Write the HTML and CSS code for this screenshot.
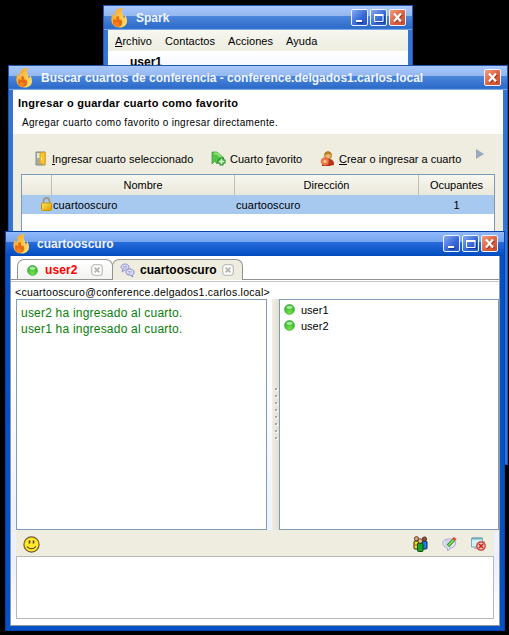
FILE: index.html
```html
<!DOCTYPE html>
<html lang="es">
<head>
<meta charset="utf-8">
<title>Spark</title>
<link rel="stylesheet" href="styles.css">
</head>
<body>
<svg class="defs" width="0" height="0">
  <defs>
    <linearGradient id="fire" x1="0" y1="0" x2="1" y2="1"><stop offset="0" stop-color="#f79a1c"/><stop offset=".5" stop-color="#fdc54a"/><stop offset="1" stop-color="#ffe373"/></linearGradient>
    <radialGradient id="ball" cx=".5" cy=".8" r=".8"><stop offset="0" stop-color="#79e04c"/><stop offset=".7" stop-color="#38bd30"/><stop offset="1" stop-color="#249a26"/></radialGradient>
    <linearGradient id="gold" x1="0" y1="0" x2="1" y2="1"><stop offset="0" stop-color="#ffe65a"/><stop offset="1" stop-color="#dd9a00"/></linearGradient>
    <symbol id="flame" viewBox="0 0 18 20">
      <path d="M12 0C4 0 3 4 5 8C3 8 2 7 2 5C0 9 0 12 1 15C3 19 6 19.500 9 19.500C13 19.500 16 17 16 13C16 11 15.500 9 14 7C14 9 13.500 10 12.500 10C13 7 9 4 12 0Z" fill="url(#fire)"/>
      <path d="M8 8C4 8 5 11 6 12C4 12 3.500 11 3 10.500C1.500 13 1.500 16 4 18C6 19.500 10 19 11 16C12 13 10 12 10 11C9.500 12 9 12 8.500 12C9 10 7 10 8 8Z" fill="#ea6c12"/>
      <path d="M3.500 15.500C5 13 6.500 14.500 8 15.500C9 16.500 8 18 6.500 18C5 18 3.500 17 3.500 15.500Z" fill="#f58420"/>
    </symbol>
    <symbol id="min" viewBox="0 0 17 17"><path d="M6 13.500h6" stroke="#173c9b" stroke-width="2"/><path d="M5 12h6" stroke="#fff" stroke-width="2"/></symbol>
    <symbol id="max" viewBox="0 0 17 17"><path d="M6 13.500h8.500V7" stroke="#173c9b" fill="none"/><path d="M4.500 6.500h8.500v6h-8.500z" stroke="#fff" fill="none"/><path d="M4 6h9.500" stroke="#fff" stroke-width="2"/></symbol>
    <symbol id="cross" viewBox="0 0 17 17"><path d="M6 5.500l7 8M13 5.500l-7 8" stroke="#9c311f" stroke-width="2"/><path d="M5 4.500l7 8M12 4.500l-7 8" stroke="#fff" stroke-width="2.200"/></symbol>
    <symbol id="dot" viewBox="0 0 11 11"><circle cx="5.500" cy="5.500" r="5" fill="url(#ball)" stroke="#45aa3b" stroke-width=".6"/><ellipse cx="5.500" cy="3.200" rx="3" ry="1.700" fill="#caf5bd" opacity=".75"/></symbol>
    <symbol id="tabx" viewBox="0 0 11 11"><rect x=".6" y=".6" width="9.800" height="9.800" rx="3" fill="#fff" stroke="#c0c0bc" stroke-width="1.200"/><path d="M3.300 3.300l4.400 4.400M7.700 3.300l-4.400 4.400" stroke="#b5b5b2" stroke-width="1.700"/></symbol>
  </defs>
</svg>

<main class="desktop">
  <section class="window spark">
    <header class="titlebar">
      <svg class="flame"><use href="#flame"/></svg>
      <h1>Spark</h1>
      <div class="controls">
        <button class="ctl"><svg><use href="#min"/></svg></button>
        <button class="ctl"><svg><use href="#max"/></svg></button>
        <button class="ctl close"><svg><use href="#cross"/></svg></button>
      </div>
    </header>
    <nav class="menubar"><span><u>A</u>rchivo</span><span>Contactos</span><span>Acciones</span><span>Ayuda</span></nav>
    <div class="profile">user1</div>
  </section>

  <section class="window browse">
    <header class="titlebar">
      <svg class="flame"><use href="#flame"/></svg>
      <h1>Buscar cuartos de conferencia - conference.delgados1.carlos.local</h1>
      <div class="controls"><button class="ctl close"><svg><use href="#cross"/></svg></button></div>
    </header>
    <div class="intro">
      <h2>Ingresar o guardar cuarto como favorito</h2>
      <p>Agregar cuarto como favorito o ingresar directamente.</p>
    </div>
    <div class="actions">
      <svg class="ic-door" viewBox="0 0 12 15"><path d="M1 1h9v13H1z" fill="#a8aea6" stroke="#888c80"/><path d="M2 2h3v5H2z" fill="#d7edf2"/><path d="M5 2l5-1v13l-5-2z" fill="#ffc42e" stroke="#dfa01b"/><path d="M6 8h1" stroke="#fff3bc" stroke-width="2"/></svg>
      <span class="a1"><u>I</u>ngresar cuarto seleccionado</span>
      <svg class="ic-tag" viewBox="0 0 15 15"><path d="M1 1L6 1L13 7L10 12L7 10L6 13L4 10L1 13Z" fill="#55c248" stroke="#3a9b35" stroke-width=".7"/><path d="M3 2.500h3l5 4.500" fill="none" stroke="#8ee277" stroke-width="2"/><path d="M10.500 6.500v8M6.500 10.500h8" stroke="#17861c" stroke-width="4"/><path d="M10.500 7.500v6M7.500 10.500h6" stroke="#c9f6ba" stroke-width="1.800"/></svg>
      <span class="a2">Cuarto <u>f</u>avorito</span>
      <svg class="ic-person" viewBox="0 0 15 16"><path d="M2 15c0-6 2-7 6-7c4 0 6 1 6 6l-5 1z" fill="#b9311b"/><circle cx="8" cy="4.500" r="3.500" fill="#e9b568" stroke="#b37427"/><path d="M4.500 4c0-5 7-5 7 0l-3-1z" fill="#ba7a20"/><circle cx="5" cy="10.500" r="3.800" fill="#f27b45" stroke="#e0502c" stroke-dasharray="1.500 1"/><circle cx="5" cy="10.500" r="1.500" fill="#ffd397"/></svg>
      <span class="a3"><u>C</u>rear o ingresar a cuarto</span>
      <i class="more"></i>
    </div>
    <div class="rooms">
      <div class="row head"><span></span><span>Nombre</span><span>Dirección</span><span>Ocupantes</span></div>
      <div class="row selected">
        <span><svg class="ic-lock" viewBox="0 0 11 14"><path d="M2.500 7V4c0-4 6-4 6 0v3" fill="none" stroke="#9e9a83" stroke-width="1.800"/><rect x=".5" y="6" width="10" height="7.500" rx="1" fill="url(#gold)" stroke="#c99600"/></svg></span>
        <span>cuartooscuro</span><span>cuartooscuro</span><span>1</span>
      </div>
    </div>
  </section>

  <section class="window chat">
    <header class="titlebar">
      <svg class="flame"><use href="#flame"/></svg>
      <h1>cuartooscuro</h1>
      <div class="controls">
        <button class="ctl"><svg><use href="#min"/></svg></button>
        <button class="ctl"><svg><use href="#max"/></svg></button>
        <button class="ctl close"><svg><use href="#cross"/></svg></button>
      </div>
    </header>
    <div class="frame">
      <div class="tabs">
        <div class="tab alert"><svg class="dot"><use href="#dot"/></svg><b>user2</b><svg class="tabx"><use href="#tabx"/></svg></div>
        <div class="tab current">
          <svg class="ic-talk" viewBox="0 0 15 15"><path d="M1 4C1 0 9 0 9 4C9 7 6 7 5 7L2 9L3 6C2 6 1 5 1 4Z" fill="#d5d8f5" stroke="#9297c8"/><path d="M6 9C6 5 14 5 14 9C14 11 13 12 12 12L13 14L10 12C7 12 6 11 6 9Z" fill="#dfe2fa" stroke="#8389bd"/><path d="M3 3.500h4M3 5h4M8 8.500h4M8 10h4" stroke="#9ca0ce" stroke-width=".7"/></svg>
          <b>cuartooscuro</b><svg class="tabx"><use href="#tabx"/></svg>
        </div>
      </div>
      <div class="address">&lt;cuartooscuro@conference.delgados1.carlos.local&gt;</div>
      <div class="panes">
        <div class="log"><p>user2 ha ingresado al cuarto.</p><p>user1 ha ingresado al cuarto.</p></div>
        <div class="splitter"><i></i><i></i><i></i><i></i><i></i><i></i><i></i><i></i></div>
        <ul class="people"><li><svg class="dot"><use href="#dot"/></svg>user1</li><li><svg class="dot"><use href="#dot"/></svg>user2</li></ul>
      </div>
      <div class="compose">
        <div class="tools">
          <svg class="ic-smile" viewBox="0 0 17 17"><circle cx="8.500" cy="8.500" r="7.600" fill="#ffe629" stroke="#715d26" stroke-width="1.200"/><path d="M6.500 4.500v3M10.500 4.500v3" stroke="#403718" stroke-width="1.500"/><path d="M4 10.500c2 3 7 3 9 0" fill="none" stroke="#403718" stroke-width="1.100"/></svg>
          <svg class="ic-group" viewBox="0 0 15 16"><rect x="1" y="5" width="5" height="8" rx="1" fill="#f9df17" stroke="#292512"/><rect x="9" y="5" width="5" height="8" rx="1" fill="#197cea" stroke="#152b51"/><circle cx="3.500" cy="2.700" r="2.100" fill="#dfa77c" stroke="#402514" stroke-width=".8"/><circle cx="11.500" cy="3" r="2.100" fill="#8e552e" stroke="#35200f" stroke-width=".8"/><rect x="4.500" y="7" width="5.500" height="8.500" rx="1" fill="#14a526" stroke="#064d10"/><circle cx="7.200" cy="5" r="2.300" fill="#f0bd90" stroke="#402514" stroke-width=".8"/><path d="M2 9h2" stroke="#e73922"/></svg>
          <svg class="ic-note" viewBox="0 0 15 15"><path d="M.8 6C.8 .5 13.500 .5 13.500 6C13.500 9 11 11 8 11L6 14L5 10.500C2 10 .8 8 .8 6Z" fill="#e9e8fb" stroke="#a7a5cb"/><path d="M3 4h6M3 6h4M3 8h3" stroke="#bab9df"/><path d="M6 9L11.500 3" stroke="#368e29" stroke-width="3.400"/><path d="M6.500 8.500L11.500 3" stroke="#86df65" stroke-width="1.800"/><path d="M11.500 3l1.700-2" stroke="#e44127" stroke-width="3.500"/></svg>
          <svg class="ic-leave" viewBox="0 0 15 14"><path d="M3 4h11v8H3z" fill="#b8bdba"/><path d="M.5 1h11v9H.5z" fill="#d5f0f5" stroke="#84aab7"/><path d="M1 1.500h10" stroke="#6babbd" stroke-width="2"/><circle cx="10" cy="9" r="4.200" fill="#f5c6b9" stroke="#cf3128" stroke-width="1.200"/><path d="M8 7l4 4M12 7l-4 4" stroke="#c91f1c" stroke-width="1.500"/></svg>
        </div>
        <div class="input"></div>
      </div>
    </div>
  </section>
</main>
</body>
</html>
```
FILE: styles.css
```css
* { box-sizing: border-box; }
body { margin: 0; background: #000; font: 11px/14px "Liberation Sans", Arial, sans-serif; color: #000; }
h1, h2, p, ul { margin: 0; padding: 0; }
svg { display: block; flex: none; }
.defs { position: absolute; }
.desktop { position: relative; width: 509px; height: 635px; overflow: hidden; }
span, b, h1, h2, p { white-space: nowrap; }

.window { position: absolute; display: flex; flex-direction: column; background: #3475d1; border: 1px solid #2055ad; padding: 0 4px 4px; }
.spark { left: 103px; top: 5px; width: 310px; height: 200px; }
.browse { left: 8px; top: 65px; width: 500px; height: 400px; }
.chat { left: 5px; top: 231px; width: 500px; height: 400px; background: #0450c5; border-color: #0743ac; }

.titlebar { flex: none; display: flex; height: 24px; margin: 0 -4px; padding: 3px 6px 0 7px; background: linear-gradient(#a9c8fc 0, #93b7ef 10px, #4d87dc 10px, #2d6bc9 22px, #3b79d4 23px, #77a7e6 23px); }
.chat .titlebar { background: linear-gradient(#91b9fd 0, #74a5ed 10px, #286cdc 10px, #0651c4 22px, #0149bd 24px); }
.titlebar h1 { color: #f2f6ff; font-size: 12px; line-height: 18px; margin-left: 7px; font-weight: bold; }
.chat h1 { margin-left: 6px; }
.flame { width: 18px; height: 20px; margin-top: -1px; }
.controls { display: flex; gap: 2px; margin-left: auto; }
.ctl { width: 17px; height: 17px; padding: 0; border: 1px solid #eef3ff; border-radius: 2px; background: linear-gradient(135deg, #86a9f0, #3465d7 60%, #2453c4); }
.ctl svg { width: 17px; height: 17px; margin: -1px; }
.ctl.close { background: linear-gradient(135deg, #ee9e80, #df6544 50%, #ca4b2b); }

.menubar { flex: none; display: flex; gap: 13px; height: 21px; padding: 4px 7px; letter-spacing: .05px; background: linear-gradient(#f8f7f0, #eeede0); }
.profile { flex: 1; background: linear-gradient(#fff, #f7f9ff 14px); padding: 4px 22px; font-size: 12px; font-weight: bold; }

.intro { flex: none; height: 44px; padding: 6px 5px; background: #fff; }
.intro h2 { font-size: 11px; line-height: 14px; letter-spacing: .27px; }
.intro p { font-size: 10px; line-height: 14px; margin: 6px 0 0 4px; letter-spacing: .31px; }
.actions { flex: none; display: flex; align-items: center; height: 40px; padding: 9px 9px 0 22px; background: #efede0; }
.ic-door { width: 12px; height: 15px; margin-right: 5px; }
.a1 { width: 159px; }
.ic-tag { width: 15px; height: 15px; margin-right: 4px; }
.a2 { width: 90px; }
.ic-person { width: 15px; height: 16px; margin-right: 4px; }
.a3 { width: 137px; }
.more { border-left: 8px solid #9ba9c0; border-top: 5px solid transparent; border-bottom: 5px solid transparent; margin-bottom: 9px; }
.rooms { flex: 1; padding: 0 8px; background: #efede0; display: flex; flex-direction: column; }
.rooms::after { content: ""; flex: 1; background: #fff; border: solid #7b9ab9; border-width: 0 1px; }
.row { display: grid; grid-template-columns: 30px 183px 184px 1fr; border: solid #7b9ab9; border-width: 0 1px; line-height: 20px; }
.head { height: 21px; border-top-width: 1px; background: linear-gradient(#f8f7f0, #eae8da); text-align: center; }
.head span { border-right: 1px solid #c1beaf; border-bottom: 1px solid #dedbcd; line-height: 21px; }
.head span:last-child { border-right: 0; }
.selected { height: 19px; background: #a7c9f0; }
.selected span { padding-left: 1px; letter-spacing: .06px; }
.selected span:first-child { padding: 2px 0 0 19px; }
.selected span:last-child { text-align: center; padding: 0; }
.ic-lock { width: 11px; height: 14px; }

.frame { flex: 1; display: flex; flex-direction: column; background: linear-gradient(#fff 100px, #eaf0ff 300px, #fff); border: solid #92989e; border-width: 0 1px 1px; }
.tabs { flex: none; display: flex; height: 24px; padding: 3px 0 0 6px; background: #fff; border-bottom: 1px solid #929292; }
.tab { display: flex; align-items: center; height: 20px; border: 1px solid #929292; border-bottom: 0; border-radius: 7px 7px 0 0; font-size: 12px; }
.alert { width: 96px; padding: 1px 9px 0; background: linear-gradient(#fff, #f2f2ef); color: #f00; }
.current { width: 131px; margin-left: -1px; padding: 0 8px 0 7px; background: #efede0; height: 21px; }
.tabs .tabx { margin-left: auto; }
.tabx { width: 12px; height: 12px; }
.dot { width: 11px; height: 11px; }
.alert b { margin-left: 7px; letter-spacing: .1px; }
.ic-talk { width: 15px; height: 15px; margin-right: 5px; }
.address { flex: none; height: 19px; padding: 5px 4px 0; font-size: 10.500px; line-height: 14px; letter-spacing: .26px; background: linear-gradient(#fff 1px, #c5c5c5 1px, #c5c5c5 2px, #fff 2px); }
.panes { flex: none; display: flex; height: 231px; padding-left: 5px; }
.log { width: 251px; border: 1px solid #7f9db9; background: #fff; padding: 5px 4px; color: #078007; font-size: 12px; line-height: 16px; letter-spacing: .21px; }
.splitter { width: 7px; margin-left: 5px; padding: 89px 0 0 3px; background: linear-gradient(90deg, #f0eee5, #e3dfd1); display: flex; flex-direction: column; gap: 5px; }
.splitter i { width: 2px; height: 2px; background: #aaa99f; box-shadow: 1px 1px #fff; flex: none; }
.people { flex: 1; border: 1px solid #7f9db9; background: #fff; list-style: none; padding: 2px 4px; }
.people li { display: flex; gap: 6px; align-items: center; height: 16px; }
.people .dot { margin-top: -1px; }
.compose { flex: none; padding: 0 5px; border-top: 2px solid #efede0; }
.tools { display: flex; align-items: center; height: 24px; padding: 0 8px 0 7px; background: #efede0; }
.ic-smile { width: 17px; height: 17px; margin-right: auto; }
.ic-group { width: 15px; height: 16px; margin-right: 14px; }
.ic-note { width: 15px; height: 15px; margin-right: 14px; }
.ic-leave { width: 15px; height: 14px; }
.input { height: 63px; border: 1px solid #b9b9b9; background: #fff; }
```
